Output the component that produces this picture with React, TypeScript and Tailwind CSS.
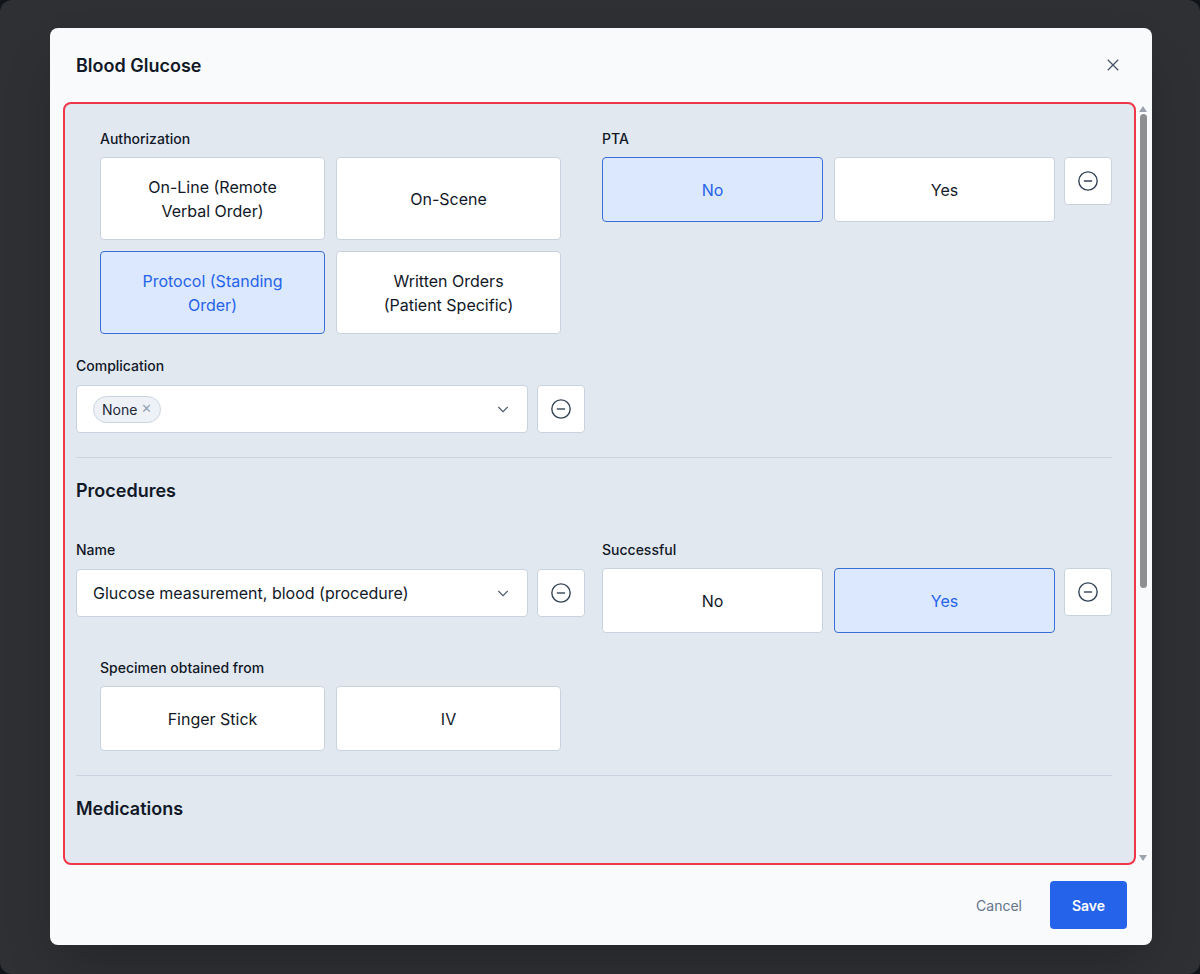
import React from "react";

const font = { fontFamily: "Inter, 'Noto Sans', sans-serif" };

function MinusBtn({ className = "" }: { className?: string }) {
  return (
    <button className={`w-12 h-12 shrink-0 bg-white border border-[#c9d2df] rounded flex items-center justify-center ${className}`}>
      <svg width="22" height="22" viewBox="0 0 24 24" fill="none" stroke="#334155" strokeWidth="1.5">
        <circle cx="12" cy="12" r="10" />
        <line x1="7.5" y1="12" x2="16.5" y2="12" />
      </svg>
    </button>
  );
}

function Choice({ label, active = false, h = "h-[65px]", w = "w-[225px]" }: { label: string; active?: boolean; h?: string; w?: string }) {
  return (
    <button
      className={`${w} ${h} rounded border px-[30px] text-[16px] leading-6 text-center ${
        active ? "bg-[#dbe8fd] border-[#3b6fd8] text-[#2563eb]" : "bg-white border-[#c9d2df] text-[#111827]"
      }`}
    >
      {label}
    </button>
  );
}

function Chevron() {
  return (
    <svg width="16" height="16" viewBox="0 0 24 24" fill="none" stroke="#475569" strokeWidth="1.6">
      <polyline points="5,9 12,16 19,9" />
    </svg>
  );
}

export default function App() {
  return (
    <div style={font} className="w-[1200px] h-[974px] bg-[#111418] overflow-hidden">
      <div className="w-full h-full rounded-xl bg-[#2e3033] pt-7 pl-[50px]">
        <div className="w-[1102px] h-[917px] bg-[#f8fafc] rounded-lg flex flex-col shadow-2xl">
          <div className="h-[74px] flex items-center justify-between pl-[26px] pr-[30px]">
            <h2 className="text-[18px] font-semibold text-[#111827]">Blood Glucose</h2>
            <svg width="18" height="18" viewBox="0 0 24 24" fill="none" stroke="#475569" strokeWidth="1.6">
              <line x1="5" y1="5" x2="19" y2="19" />
              <line x1="19" y1="5" x2="5" y2="19" />
            </svg>
          </div>
          <div className="flex h-[763px] pl-[13px]">
            <div className="w-[1073px] h-full border-2 border-[#f0374a] rounded-lg bg-[#e2e8f0] pl-[11px] pr-[22px] pt-[24px] overflow-hidden">
              <div className="flex">
                <div className="w-[526px] pl-6">
                  <div className="text-[14px] font-medium text-[#111827] mb-[8px]">Authorization</div>
                  <div className="grid grid-cols-[225px_225px] gap-[11px]">
                    <Choice label="On-Line (Remote Verbal Order)" h="h-[83px]" />
                    <Choice label="On-Scene" h="h-[83px]" />
                    <Choice label="Protocol (Standing Order)" h="h-[83px]" active />
                    <Choice label="Written Orders (Patient Specific)" h="h-[83px]" />
                  </div>
                </div>
                <div>
                  <div className="text-[14px] font-medium text-[#111827] mb-[8px]">PTA</div>
                  <div className="flex gap-[11px] items-start">
                    <Choice label="No" w="w-[221px]" active />
                    <Choice label="Yes" w="w-[221px]" />
                    <MinusBtn className="ml-[-2px]" />
                  </div>
                </div>
              </div>
              <div className="text-[14px] font-medium text-[#111827] mt-[21px] mb-[9px]">Complication</div>
              <div className="flex gap-[9px]">
                <div className="w-[452px] h-12 bg-white border border-[#c9d2df] rounded flex items-center justify-between pl-4 pr-4">
                  <span className="flex items-center gap-1 rounded-full border border-[#cbd5e1] bg-[#eef2f7] px-2 py-[2px] text-[14px] text-[#1e293b]">
                    None <span className="text-[#94a3b8] text-[13px]">✕</span>
                  </span>
                  <Chevron />
                </div>
                <MinusBtn />
              </div>
              <div className="border-t border-[#cbd5e1] mt-6 mb-[19px]" />
              <h3 className="text-[18px] font-semibold text-[#111827]">Procedures</h3>
              <div className="flex mt-[35px]">
                <div className="w-[526px]">
                  <div className="text-[14px] font-medium text-[#111827] mb-[9px]">Name</div>
                  <div className="flex gap-[9px]">
                    <div className="w-[452px] h-12 bg-white border border-[#c9d2df] rounded flex items-center justify-between px-4 text-[16px] text-[#111827]">
                      Glucose measurement, blood (procedure)
                      <Chevron />
                    </div>
                    <MinusBtn />
                  </div>
                </div>
                <div>
                  <div className="text-[14px] font-medium text-[#111827] mb-[8px]">Successful</div>
                  <div className="flex gap-[11px] items-start">
                    <Choice label="No" w="w-[221px]" />
                    <Choice label="Yes" w="w-[221px]" active />
                    <MinusBtn className="ml-[-2px]" />
                  </div>
                </div>
              </div>
              <div className="pl-6 mt-[24px]">
                <div className="text-[14px] font-medium text-[#111827] mb-[8px]">Specimen obtained from</div>
                <div className="flex gap-[11px]">
                  <Choice label="Finger Stick" />
                  <Choice label="IV" />
                </div>
              </div>
              <div className="border-t border-[#cbd5e1] mt-6 mb-[19px]" />
              <h3 className="text-[18px] font-semibold text-[#111827]">Medications</h3>
            </div>
            <div className="w-[12px] ml-[1px] flex flex-col items-center pt-1">
              <div className="w-0 h-0 border-x-[4px] border-x-transparent border-b-[6px] border-b-[#9ca3af]" />
              <div className="w-[7px] h-[474px] bg-[#8f8f8f] rounded-full mt-[2px]" />
              <div className="flex-1" />
              <div className="w-0 h-0 border-x-[4px] border-x-transparent border-t-[6px] border-t-[#9ca3af] mb-1" />
            </div>
          </div>
          <div className="flex-1 flex items-center justify-end gap-7 pr-[25px]">
            <span className="text-[14px] text-[#64748b]">Cancel</span>
            <button className="w-[77px] h-12 rounded bg-[#2563eb] text-white text-[14px] font-semibold">Save</button>
          </div>
        </div>
      </div>
    </div>
  );
}
